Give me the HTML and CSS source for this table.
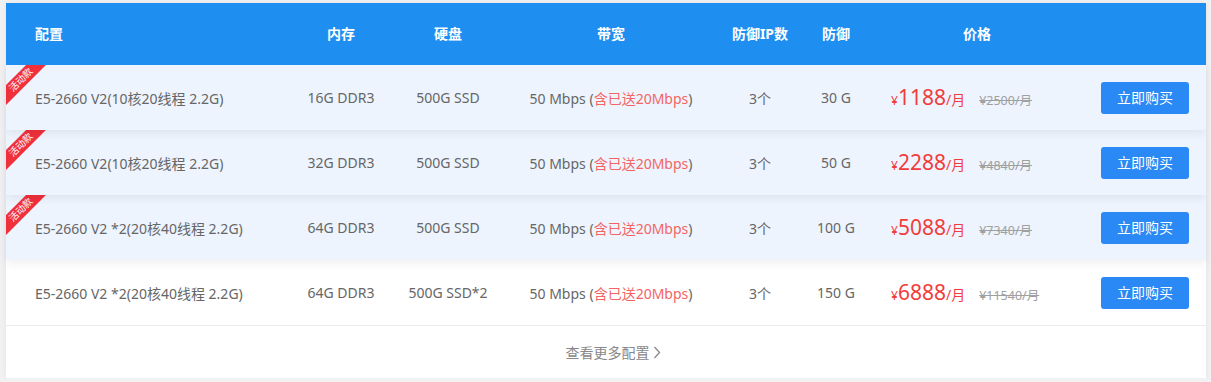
FILE: index.html
```html
<!DOCTYPE html>
<html lang="zh-CN">
<head>
<meta charset="utf-8">
<title>配置</title>
<link rel="stylesheet" href="styles.css">
</head>
<body>
<div class="card">
  <div class="row head">
    <div class="c c1">配置</div>
    <div class="c">内存</div>
    <div class="c">硬盘</div>
    <div class="c">带宽</div>
    <div class="c">防御IP数</div>
    <div class="c">防御</div>
    <div class="c">价格</div>
    <div class="c"></div>
  </div>

  <div class="row hot">
    <div class="ribbon"><span>活动款</span></div>
    <div class="c c1">E5-2660 V2(10核20线程 2.2G)</div>
    <div class="c">16G DDR3</div>
    <div class="c">500G SSD</div>
    <div class="c">50 Mbps (<em>含已送20Mbps</em>)</div>
    <div class="c">3个</div>
    <div class="c">30 G</div>
    <div class="c price"><span class="yen">¥</span><span class="num">1188</span><span class="unit">/月</span><s class="old">¥2500/月</s></div>
    <div class="c buy"><a class="btn">立即购买</a></div>
  </div>

  <div class="row hot">
    <div class="ribbon"><span>活动款</span></div>
    <div class="c c1">E5-2660 V2(10核20线程 2.2G)</div>
    <div class="c">32G DDR3</div>
    <div class="c">500G SSD</div>
    <div class="c">50 Mbps (<em>含已送20Mbps</em>)</div>
    <div class="c">3个</div>
    <div class="c">50 G</div>
    <div class="c price"><span class="yen">¥</span><span class="num">2288</span><span class="unit">/月</span><s class="old">¥4840/月</s></div>
    <div class="c buy"><a class="btn">立即购买</a></div>
  </div>

  <div class="row hot">
    <div class="ribbon"><span>活动款</span></div>
    <div class="c c1">E5-2660 V2 *2(20核40线程 2.2G)</div>
    <div class="c">64G DDR3</div>
    <div class="c">500G SSD</div>
    <div class="c">50 Mbps (<em>含已送20Mbps</em>)</div>
    <div class="c">3个</div>
    <div class="c">100 G</div>
    <div class="c price"><span class="yen">¥</span><span class="num">5088</span><span class="unit">/月</span><s class="old">¥7340/月</s></div>
    <div class="c buy"><a class="btn">立即购买</a></div>
  </div>

  <div class="row plain">
    <div class="c c1">E5-2660 V2 *2(20核40线程 2.2G)</div>
    <div class="c">64G DDR3</div>
    <div class="c">500G SSD*2</div>
    <div class="c">50 Mbps (<em>含已送20Mbps</em>)</div>
    <div class="c">3个</div>
    <div class="c">150 G</div>
    <div class="c price"><span class="yen">¥</span><span class="num">6888</span><span class="unit">/月</span><s class="old">¥11540/月</s></div>
    <div class="c buy"><a class="btn">立即购买</a></div>
  </div>

  <div class="more">查看更多配置<svg class="chev" width="8" height="13" viewBox="0 0 8 13"><path d="M1.5 1 L6.5 6.5 L1.5 12" fill="none" stroke="#888" stroke-width="1.3"/></svg></div>
</div>
</body>
</html>
```

FILE: styles.css
```css
html, body {
  margin: 0;
  padding: 0;
}
body {
  background: #f1f1f3;
  font-family: "Noto Sans", "Noto Sans CJK SC", sans-serif;
  font-size: 14px;
  color: #666;
}
.card {
  margin: 3px 5px 0 6px;
  width: 1200px;
  background: #fff;
  box-shadow: 0 0 6px rgba(0, 0, 0, 0.06);
}
.row {
  display: grid;
  grid-template-columns: 280px 110px 104px 222px 76px 76px 206px 126px;
  align-items: center;
  height: 65px;
  position: relative;
}
.row.head {
  height: 62px;
  background: #1e8ff0;
  color: #fff;
  font-weight: bold;
  z-index: 5;
}
.row.head .c {
  margin-top: -3px;
}
.row.hot {
  background: #edf4fe;
  box-shadow: 0 3px 9px rgba(0, 0, 0, 0.07);
}
.row.hot:nth-child(2) { z-index: 4; }
.row.hot:nth-child(3) { z-index: 3; }
.row.hot:nth-child(4) { z-index: 2; }
.row.plain {
  border-bottom: 1px solid #ebebeb;
}
.c {
  text-align: center;
  white-space: nowrap;
}
.c.c1 {
  text-align: left;
  padding-left: 29px;
}
em {
  font-style: normal;
  color: #f46464;
}
.price {
  text-align: left;
  padding-left: 17px;
  color: #f23c3c;
  display: flex;
  align-items: baseline;
}
.yen {
  font-size: 12px;
}
.num {
  font-size: 21px;
  line-height: 1;
}
.unit {
  font-size: 14px;
}
.old {
  margin-left: 14px;
  font-size: 12.5px;
  color: #a0a0a0;
}
.buy {
  text-align: left;
  padding-left: 21px;
}
.btn {
  display: inline-block;
  width: 88px;
  height: 32px;
  line-height: 32px;
  text-align: center;
  background: #2a89f4;
  color: #fff;
  border-radius: 3px;
  font-size: 14px;
}
.ribbon {
  position: absolute;
  left: 0;
  top: 0;
  width: 44px;
  height: 44px;
  overflow: hidden;
}
.ribbon span {
  position: absolute;
  left: -14px;
  top: 7.5px;
  width: 58px;
  height: 14px;
  line-height: 14px;
  background: #f0303a;
  color: #fff;
  font-size: 9.5px;
  text-align: center;
  transform: rotate(-45deg);
}
.more {
  height: 52px;
  display: flex;
  align-items: center;
  justify-content: center;
  padding-left: 14px;
  color: #888;
  font-size: 14px;
  gap: 3px;
}
.chev {
  display: block;
}
```
